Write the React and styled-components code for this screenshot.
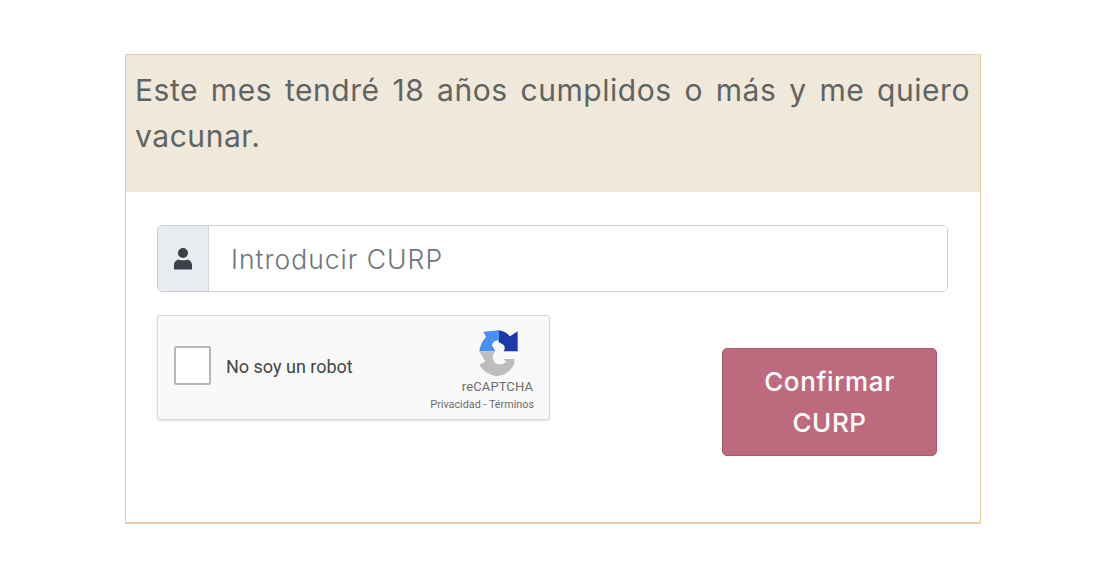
import React from "react";
import styled, { createGlobalStyle } from "styled-components";

const Global = createGlobalStyle`
  html, body { margin: 0; padding: 0; background: #fff; }
  body { font-family: "Inter", "Liberation Sans", sans-serif; }
`;

const Page = styled.div`
  width: 1120px;
  height: 581px;
  padding: 54px 139px 0 125px;
  box-sizing: border-box;
  background: #fff;
`;

const Card = styled.section`
  height: 470px;
  border: 1px solid #e4cfa8;
  border-bottom-width: 2px;
  box-sizing: border-box;
  background: #fff;
`;

const Header = styled.header`
  height: 137px;
  box-sizing: border-box;
  padding: 12px 10px 0 9px;
  background: #f0e8da;
  color: #5f6463;
  font-size: 30px;
  letter-spacing: 0.55px;
  line-height: 46px;
  font-weight: 400;
  text-align: justify;
`;

const Body = styled.div`
  padding: 33px 32px 0 31px;
`;

const InputGroup = styled.div`
  display: flex;
  height: 67px;
  border: 1px solid #c9d0d8;
  border-radius: 5px;
  box-sizing: border-box;
  overflow: hidden;
`;

const Addon = styled.div`
  flex: 0 0 50px;
  display: flex;
  align-items: center;
  justify-content: center;
  background: #e9ecef;
  border-right: 1px solid #ced4da;
  color: #3a4149;
`;

const FieldInput = styled.input`
  flex: 1;
  min-width: 0;
  border: 0;
  outline: 0;
  padding: 0 22px;
  font-family: inherit;
  font-size: 26.5px;
  letter-spacing: 1px;
  font-weight: 300;
  color: #6c757d;
  &::placeholder { color: #6c757d; opacity: 1; }
`;

const Row = styled.div`
  display: flex;
  justify-content: space-between;
  align-items: flex-start;
  margin-top: 23px;
  padding-right: 11px;
`;

const Captcha = styled.div`
  display: flex;
  align-items: flex-start;
  width: 393px;
  height: 105px;
  box-sizing: border-box;
  padding: 0 15px 0 16px;
  background: #f9f9f9;
  border: 1px solid #d8d8d8;
  border-radius: 3px;
  box-shadow: 0 1px 2px rgba(0, 0, 0, 0.12);
`;

const CheckBox = styled.div`
  width: 37px;
  height: 39px;
  margin-top: 30px;
  box-sizing: border-box;
  background: #fff;
  border: 2px solid #b8b8b8;
  border-radius: 2px;
`;

const CaptchaLabel = styled.span`
  margin: 40px 0 0 15px;
  flex: 1;
  font-family: "Roboto", "Liberation Sans", sans-serif;
  font-size: 18px;
  line-height: 22px;
  color: #444;
`;

const Brand = styled.div`
  display: flex;
  flex-direction: column;
  align-items: flex-end;
  padding-top: 12px;
  font-family: "Roboto", "Liberation Sans", sans-serif;
  color: #6d6d6d;
`;

const LogoMark = styled.svg`
  display: block;
  margin-right: 13px;
`;

const BrandName = styled.span`
  font-size: 13px;
  letter-spacing: 0.1px;
  line-height: 16px;
  margin-top: 1px;
  margin-right: 1px;
`;

const BrandLinks = styled.span`
  font-size: 10.8px;
  line-height: 16px;
  margin-top: 2px;
  white-space: nowrap;
`;

const Submit = styled.button`
  width: 215px;
  height: 108px;
  margin-top: 33px;
  padding: 0 30px;
  background: #be6a7e;
  border: 1px solid #a85a6d;
  border-radius: 5px;
  color: #fff;
  font-family: inherit;
  font-size: 26px;
  letter-spacing: 0.6px;
  font-weight: 500;
  line-height: 41px;
`;

const Logo = () => (
  <LogoMark width="45" height="50" viewBox="150 25 135 150" aria-hidden="true">
    <path d="M172 36L218 32V62C208 62 200 68 198 76L208 95H160C162 78 168 65 180 52Z" fill="#4a90f2" />
    <path d="M218 32C232 34 243 40 252 50L275 35V95H232C238 88 238 78 230 74L218 68Z" fill="#1c3aa9" />
    <path d="M160 95H208C198 105 198 122 208 130C218 138 232 134 240 126L232 118H265V132C252 160 225 172 205 168C185 162 168 150 160 135L178 125C172 115 165 105 160 95Z" fill="#bdbdbd" />
  </LogoMark>
);

const UserIcon = () => (
  <svg width="18" height="23" viewBox="0 0 18 23" fill="currentColor" aria-hidden="true">
    <circle cx="9" cy="6" r="5" />
    <path d="M4 12.500C1.500 13.500 0 15.500 0 18V22.500H18V18C18 15.500 16.500 13.500 14 12.500C12.500 13.500 5.500 13.500 4 12.500Z" />
  </svg>
);

export default function App() {
  return (
    <Page>
      <Global />
      <Card>
        <Header>Este mes tendré 18 años cumplidos o más y me quiero vacunar.</Header>
        <Body>
          <InputGroup>
            <Addon><UserIcon /></Addon>
            <FieldInput placeholder="Introducir CURP" />
          </InputGroup>
          <Row>
            <Captcha>
              <CheckBox />
              <CaptchaLabel>No soy un robot</CaptchaLabel>
              <Brand>
                <Logo />
                <BrandName>reCAPTCHA</BrandName>
                <BrandLinks>Privacidad - Términos</BrandLinks>
              </Brand>
            </Captcha>
            <Submit>Confirmar CURP</Submit>
          </Row>
        </Body>
      </Card>
    </Page>
  );
}
